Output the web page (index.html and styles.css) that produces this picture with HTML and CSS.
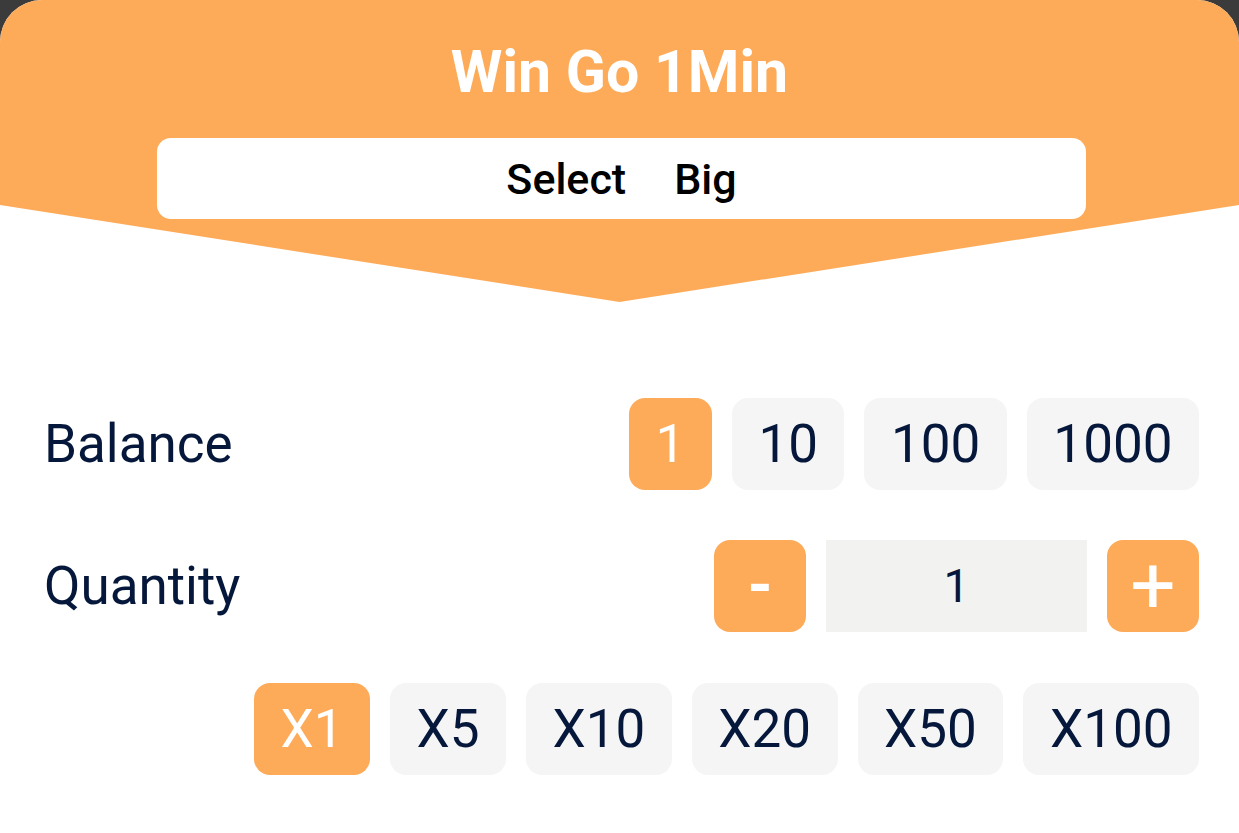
FILE: index.html
```html
<!DOCTYPE html>
<html lang="en">

<head>
    <meta charset="UTF-8">
    <meta name="viewport" content="width=device-width, initial-scale=1.0">
    <title>Win Go 1Min</title>
    <link rel="stylesheet" href="styles.css">
</head>

<body>
    <div class="sheet">
        <div class="sheet-head">
            <h1 class="title">Win Go 1Min</h1>
            <div class="select-bar">
                <span>Select</span>
                <span>Big</span>
            </div>
        </div>

        <div class="rows">
            <div class="row">
                <span class="label">Balance</span>
                <div class="options">
                    <button class="opt active">1</button>
                    <button class="opt">10</button>
                    <button class="opt">100</button>
                    <button class="opt">1000</button>
                </div>
            </div>

            <div class="row">
                <span class="label">Quantity</span>
                <div class="options">
                    <button class="step minus">-</button>
                    <input class="qty" type="text" value="1">
                    <button class="step plus">+</button>
                </div>
            </div>

            <div class="row row-end">
                <div class="options">
                    <button class="opt active">X1</button>
                    <button class="opt">X5</button>
                    <button class="opt">X10</button>
                    <button class="opt">X20</button>
                    <button class="opt">X50</button>
                    <button class="opt">X100</button>
                </div>
            </div>
        </div>
    </div>
</body>

</html>
```

FILE: styles.css
```css
body {
    margin: 0;
    background-color: #3b3b3b;
    font-family: Roboto, "Liberation Sans", sans-serif;
}

.sheet {
    background-color: #fff;
    border-radius: 42px 42px 0 0;
    overflow: hidden;
    min-height: 100vh;
}

/* orange top with the arrow cut */
.sheet-head {
    height: 302px;
    box-sizing: border-box;
    padding-top: 30px;
    background-color: #feab59;
    clip-path: polygon(0 0, 100% 0, 100% 205px, 50% 302px, 0 205px);
    text-align: center;
}

.title {
    margin: 0;
    color: #fff;
    font-size: 59px;
    font-weight: 700;
    line-height: 84px;
}

.select-bar {
    width: 929px;
    height: 81px;
    margin: 24px auto 0;
    position: relative;
    left: 2px;
    background-color: #fff;
    border-radius: 14px;
    display: flex;
    align-items: center;
    justify-content: center;
    gap: 48px;
    font-size: 43px;
    font-weight: 500;
    color: #000;
}

.rows {
    padding: 96px 40px 0 44px;
    display: flex;
    flex-direction: column;
    gap: 50px;
}

.row {
    display: flex;
    align-items: center;
    justify-content: space-between;
    height: 92px;
}

.row-end {
    justify-content: flex-end;
    margin-top: 1px;
}

.label {
    font-size: 53px;
    color: #05173a;
}

.options {
    display: flex;
    align-items: center;
    gap: 20px;
}

.opt {
    height: 92px;
    padding: 0 26.5px;
    border: none;
    border-radius: 16px;
    background-color: #f5f5f5;
    color: #05173a;
    font-family: inherit;
    font-size: 53px;
}

.opt.active {
    background-color: #feab59;
    color: #fff;
}

.step {
    width: 92px;
    height: 92px;
    border: none;
    border-radius: 16px;
    background-color: #feab59;
    color: #fff;
    font-family: inherit;
    line-height: 1;
    padding: 0;
}

.minus {
    font-size: 64px;
    font-weight: 700;
}

.plus {
    font-size: 80px;
    font-weight: 400;
}

.qty {
    width: 261px;
    height: 92px;
    box-sizing: border-box;
    border: none;
    background-color: #f2f2f0;
    text-align: center;
    font-family: inherit;
    font-size: 46px;
    color: #05173a;
    outline: none;
}
```
